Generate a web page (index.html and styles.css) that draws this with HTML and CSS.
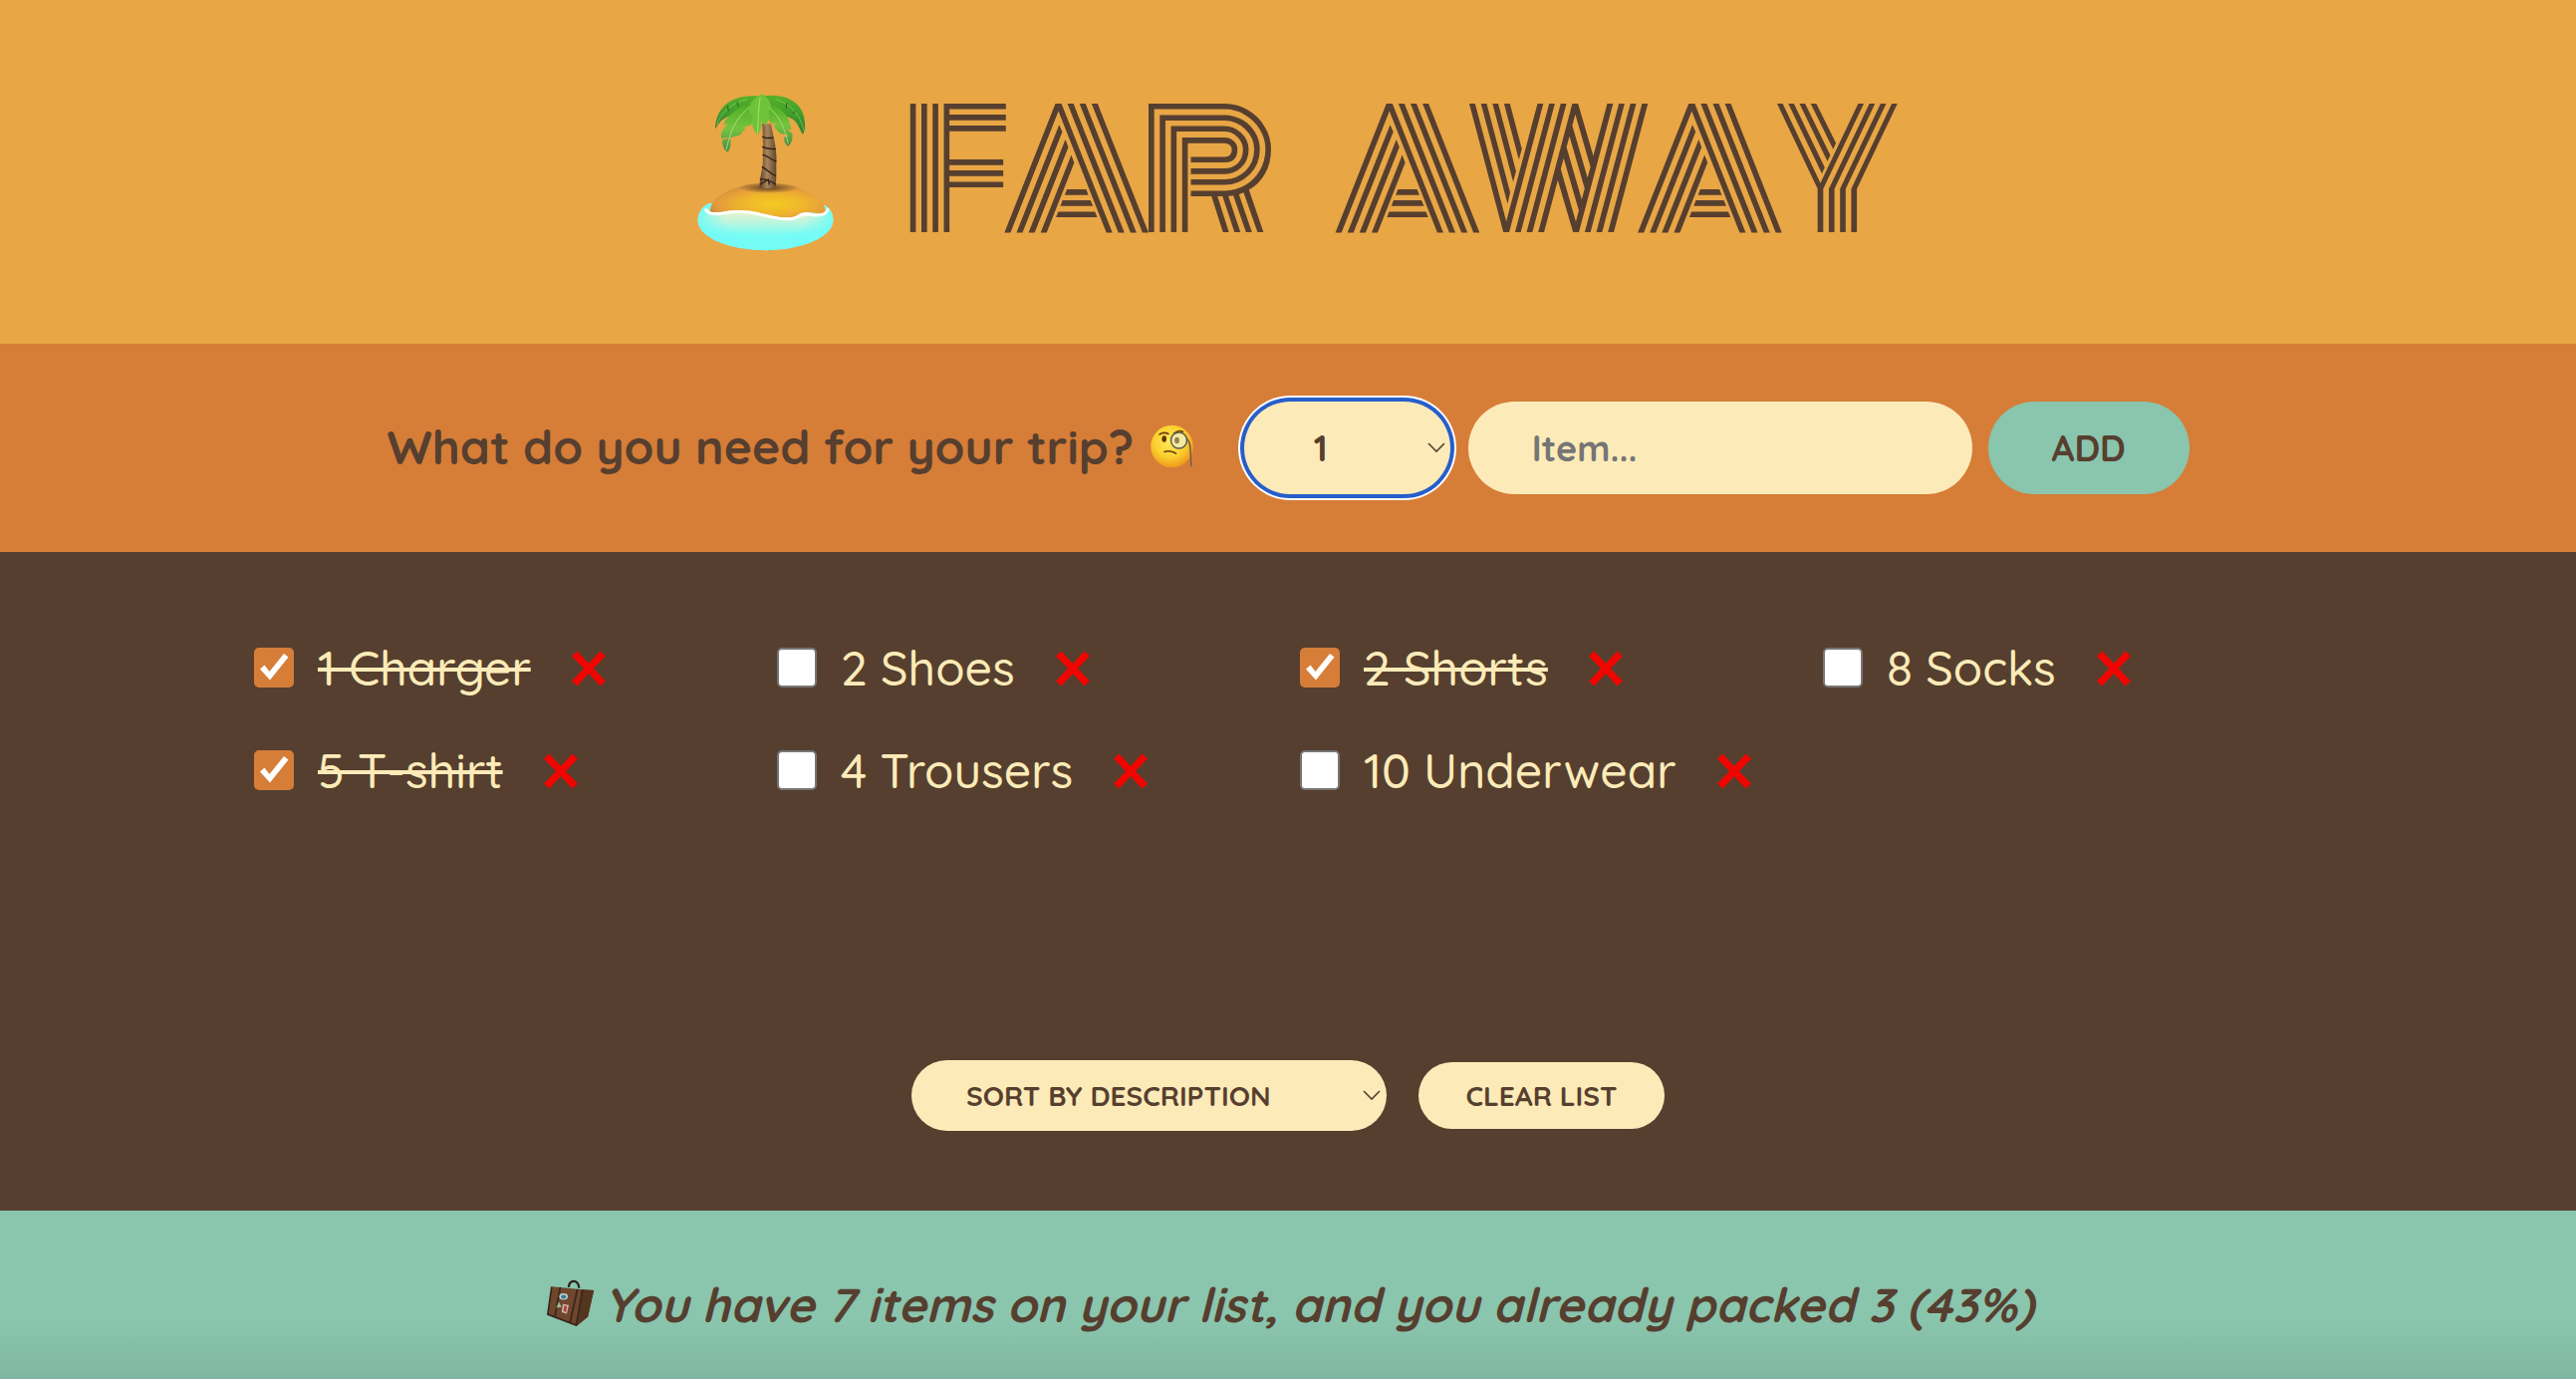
FILE: index.html
```html
<!DOCTYPE html>
<html lang="en">
<head>
<meta charset="utf-8">
<title>Far Away</title>
<link rel="stylesheet" href="styles.css">
</head>
<body>
<div class="app">
  <header class="logo">
    <svg class="island" viewBox="60 42 412 474" aria-hidden="true">
      <defs>
        <radialGradient id="sand" cx=".55" cy=".6" r=".6"><stop offset="0" stop-color="#f5ca22"/><stop offset=".45" stop-color="#efb62c"/><stop offset=".8" stop-color="#e59c3c"/><stop offset="1" stop-color="#c58a3c"/></radialGradient>
        <linearGradient id="sea" x1="0" y1="0" x2="0" y2="1"><stop offset="0" stop-color="#fff"/><stop offset=".2" stop-color="#e6f3cc"/><stop offset=".42" stop-color="#b8f6df"/><stop offset=".7" stop-color="#74fdf6"/><stop offset="1" stop-color="#8ceee6"/></linearGradient>
        <radialGradient id="shallow" cx=".5" cy=".35" r=".5"><stop offset=".6" stop-color="#74fbf6" stop-opacity="0"/><stop offset="1" stop-color="#74fbf6"/></radialGradient>
        <radialGradient id="shade"><stop offset="0" stop-color="#5e4020"/><stop offset="1" stop-color="#5e4020" stop-opacity="0"/></radialGradient>
        <linearGradient id="leaf" x1="0" y1="0" x2="0" y2="1"><stop offset="0" stop-color="#4fae22"/><stop offset=".5" stop-color="#74c43f"/><stop offset="1" stop-color="#4b8c45"/></linearGradient>
        <linearGradient id="deep" x1="0" y1="0" x2="0" y2="1"><stop offset="0" stop-color="#57b02a"/><stop offset=".5" stop-color="#3f9d2c"/><stop offset="1" stop-color="#2f7a35"/></linearGradient>
        <linearGradient id="trunk" x1="0" x2="1"><stop offset="0" stop-color="#5a3f2a"/><stop offset=".45" stop-color="#a9845a"/><stop offset="1" stop-color="#5f4630"/></linearGradient>
      </defs>
      <path fill="url(#sea)" d="M97 372C70 384 60 408 62 428c8 56 110 86 204 86s196-32 204-86c1-22-6-38-26-50z"/>
      <path fill="url(#shallow)" d="M97 372C70 384 60 408 62 428c8 56 110 86 204 86s196-32 204-86c1-22-6-38-26-50z"/>
      <path fill="url(#sand)" d="M98 402C94 352 180 312 268 312c94 0 180 40 180 88-28 8-40-4-62 0-16 2-20 18-44 16-56 0-110-22-158-19-30 1-66 14-86 5z"/>
      <ellipse cx="276" cy="326" rx="92" ry="16" fill="url(#shade)"/>
      <path fill="none" stroke="#fff" stroke-width="9" stroke-linecap="round" d="M86 392c8 14 24 13 50 10 70-12 110 4 150 12 40 9 66 6 78-2 16-12 30-6 48-4 20 2 36 0 42-16"/>
      <path fill="url(#trunk)" d="M256 132c3 46 2 80 2 112 0 26-10 50-10 80 14 5 34 5 48 1 5-32 1-60 3-90-1-38-10-66-16-102z"/>
      <path fill="none" stroke="#2e1e14" stroke-width="4" d="M256 171c10 8 18 3 34 4M256 202c10 4 24 8 42 6M257 226c16 2 26 16 42 20M255 262c16 8 26 22 42 28M249 300c18-2 32 4 48 16M250 316l24-16 4 16"/>
      <path fill="url(#deep)" d="M258 50c-64-8-140 8-144 98 12-22 24-34 46-40 40-6 70-26 98-50z"/>
      <path fill="url(#deep)" d="M258 48c66-8 130 14 127 96 0 10-4 16-7 20-10-18-16-38-34-48-40-14-60-26-86-60z"/>
      <path fill="url(#leaf)" d="M222 74c-32 4-68 26-84 62l14-4-18 24c-4 16-2 26 4 20l22-4-24 10c-2 16 6 30 15 36 10-10 10-24 10-36l-6-6 34-10 16-20-2-6 18-2c14-18 16-40 16-62z"/>
      <path fill="url(#leaf)" d="M272 74c36 4 68 34 72 76l-14-2 17 14c2 16-2 28-12 38-10-6-14-18-12-28l14-4-26-6c-10-8-16-16-20-24l8-8-16 2c-12-18-14-38-11-58z"/>
      <path fill="#6ec438" d="M256 43c-38 16-46 46-36 64l8-6c-8 24 0 50 14 64 12-14 14-30 8-40l14 12c16-12 16-36 10-46l6 2c6-20-4-40-24-50z"/>
      <path fill="none" stroke="#b4e288" stroke-width="2.500" stroke-linecap="round" d="M250 54c-6 30-6 70-8 106M216 84c-32 26-54 56-68 126M278 84c30 26 46 62 56 106"/>
      <path fill="none" stroke="#8fd060" stroke-width="2" d="M210 58c-48 12-78 40-92 78M296 58c48 14 76 50 86 96"/>
      <path fill="none" stroke="#1f5d1c" stroke-width="3" d="M152 78l2 16M180 66l4 14M330 70l-2 16M356 94l-8 8"/>
    </svg>
    <h1>Far Away</h1>
  </header>

  <form class="add-form">
    <h3>What do you need for your trip?
      <svg class="face" viewBox="0 0 44 46" aria-hidden="true">
        <defs><radialGradient id="skin" cx=".45" cy=".38" r=".62"><stop offset="0" stop-color="#fdeb5c"/><stop offset=".6" stop-color="#fbd02f"/><stop offset="1" stop-color="#ee981c"/></radialGradient></defs>
        <circle cx="21.5" cy="22" r="21.3" fill="url(#skin)"/>
        <ellipse cx="13.700" cy="14.500" rx="2.300" ry="3.300" fill="#5f3408"/>
        <path d="M9 10q4-3 9-.5M23.500 9q5-4 9-1.500M14 27.500q5-2 11.500 1.500" fill="none" stroke="#6b3a0a" stroke-width="1.600" stroke-linecap="round"/>
        <circle cx="28.500" cy="16" r="8" fill="#f3eba0" stroke="#5a5a50" stroke-width="1.500"/>
        <ellipse cx="26.500" cy="16" rx="2.400" ry="3.300" fill="#96814a"/>
        <path d="M36.500 14.500c5 3 3 16 4.500 27.500" fill="none" stroke="#6a5a46" stroke-width="1.400"/>
      </svg>
    </h3>
    <div class="select quantity" tabindex="0"><span>1</span>
      <svg class="arrow" viewBox="0 0 18 11"><path d="M1 1l8 8 8-8"/></svg>
    </div>
    <input class="item-name" type="text" placeholder="Item...">
    <button class="add" type="button">Add</button>
  </form>

  <main class="list">
    <svg class="defs" width="0" height="0" aria-hidden="true">
      <symbol id="cross" viewBox="0 0 36 36"><path fill="#f10500" d="M1 5.500 6.500 .5 18 13 29.500 .5 35 5.500 22.800 18 35 30.500 29.500 35.500 18 23 6.500 35.500 1 30.500 13.200 18z"/></symbol>
      <symbol id="tick" viewBox="0 0 40 40"><path fill="#fff" d="M6 21.500l4.500-4 5 6.500L30 6l4.500 3.500L16 32.500z"/></symbol>
    </svg>
    <ul>
      <li><i class="box on"><svg><use href="#tick"/></svg></i><span class="packed">1 Charger</span><svg class="x"><use href="#cross"/></svg></li>
      <li><i class="box"></i><span>2 Shoes</span><svg class="x"><use href="#cross"/></svg></li>
      <li><i class="box on"><svg><use href="#tick"/></svg></i><span class="packed">2 Shorts</span><svg class="x"><use href="#cross"/></svg></li>
      <li><i class="box"></i><span>8 Socks</span><svg class="x"><use href="#cross"/></svg></li>
      <li><i class="box on"><svg><use href="#tick"/></svg></i><span class="packed">5 T-shirt</span><svg class="x"><use href="#cross"/></svg></li>
      <li><i class="box"></i><span>4 Trousers</span><svg class="x"><use href="#cross"/></svg></li>
      <li><i class="box"></i><span>10 Underwear</span><svg class="x"><use href="#cross"/></svg></li>
    </ul>
    <div class="actions">
      <div class="select sort"><span>Sort by description</span>
        <svg class="arrow" viewBox="0 0 18 11"><path d="M1 1l8 8 8-8"/></svg>
      </div>
      <button class="clear" type="button">Clear list</button>
    </div>
  </main>

  <footer class="stats">
    <svg class="bag" viewBox="30 32 144 142" aria-hidden="true">
      <path fill="none" stroke="#2b211c" stroke-width="7" d="M96 56c-2-24 30-26 31 2"/>
      <path fill="#6f462e" d="M44 54l86 8 42 3-18 80-34 28-88-35z"/>
      <path fill="#54351f" d="M134 63l38 2-18 80-34 28z"/>
      <path fill="none" stroke="#3a261a" stroke-width="5" d="M70 56L54 144M122 62l-22 100M138 64l-20 108M44 54l-12 84 88 34"/>
      <ellipse cx="80" cy="84" rx="13" ry="10" fill="#c3d0c8"/>
      <ellipse cx="80" cy="85" rx="8" ry="6" fill="#3a7898"/>
      <path fill="#9fbf94" d="M66 100l8 16-16 2z"/>
      <path fill="#cbb5ac" d="M78 107l18 3-6 26-16-4z"/>
      <path fill="#b8382f" d="M82 112l8 1-2 18-8-2z"/>
    </svg>
    <em>You have 7 items on your list, and you already packed 3 (43%)</em>
  </footer>
</div>
</body>
</html>
```
FILE: styles.css
```css
* { box-sizing: border-box; margin: 0; padding: 0; }

:root {
  --sun: #e8a645;
  --clay: #d67d38;
  --bark: #563f2f;
  --cream: #fcebb8;
  --mint: #8ac5ae;
}

body {
  font-family: Quicksand, Nunito, "Open Sans", sans-serif;
  color: var(--bark);
}

.app {
  display: grid;
  grid-template-rows: 345px 209px 661px 169px;
  height: 1384px;
  overflow: hidden;
}

.logo {
  display: flex;
  align-items: center;
  justify-content: center;
  padding-left: 11px;
  background: var(--sun);
}
.island { width: 137px; height: 158px; margin-right: 70px; }
h1 {
  font-family: Monoton, sans-serif;
  font-size: 160px;
  font-weight: 400;
  letter-spacing: -10px;
  word-spacing: 60px;
  text-transform: uppercase;
}

.add-form {
  display: flex;
  align-items: center;
  justify-content: center;
  gap: 16px;
  padding-bottom: 1px;
  background: var(--clay);
}
h3 { font-size: 48px; font-weight: 700; margin-right: 34px; padding-bottom: 2px; white-space: nowrap; }
.face { width: 44px; height: 46px; vertical-align: -6px; margin-left: 3px; }

.select, .item-name, .add, .clear {
  border: 0;
  border-radius: 200px;
  background: var(--cream);
  color: inherit;
  font-family: inherit;
  font-weight: 700;
}
.select { display: flex; align-items: center; justify-content: space-between; }
.arrow { width: 18px; height: 11px; fill: none; stroke: var(--bark); stroke-width: 1.6; }

.quantity {
  width: 207px;
  height: 93px;
  padding: 0 5px 0 70px;
  font-size: 36px;
  box-shadow: 0 0 0 4px #265ecb, 0 0 0 6px #fff;
  outline: 0;
  margin-right: 2px;
}
.item-name { width: 506px; height: 93px; padding: 0 64px; font-size: 36px; }
.item-name::placeholder { color: #757575; }
.add { width: 202px; height: 93px; background: var(--mint); font-size: 36px; text-transform: uppercase; }

.list {
  display: flex;
  flex-direction: column;
  align-items: center;
  justify-content: space-between;
  padding: 64px 0 80px;
  background: var(--bark);
  color: var(--cream);
}
.defs { position: absolute; }
ul {
  display: grid;
  grid-template-columns: repeat(4, 525px);
  width: 2102px;
  padding-left: 13px;
  list-style: none;
}
li { display: flex; align-items: center; height: 103px; font-size: 48px; font-weight: 500; }
.box { width: 40px; height: 40px; margin-right: 24px; border: 2px solid #767676; border-radius: 5px; background: #fff; }
.box.on { border: 0; background: var(--clay); }
.box svg { display: block; width: 40px; height: 40px; }
.packed { text-decoration: line-through; }
.x { width: 36px; height: 36px; margin: 3px 0 0 40px; }

.actions { display: flex; align-items: center; gap: 32px; color: var(--bark); }
.sort { width: 477px; height: 71px; padding: 0 6px 0 55px; font-size: 28px; text-transform: uppercase; }
.clear { width: 247px; height: 67px; font-size: 28px; text-transform: uppercase; }

.stats {
  display: flex;
  align-items: center;
  justify-content: center;
  gap: 9px;
  padding: 18px 0 0 5px;
  background: linear-gradient(var(--mint) 65%, #80b7a1);
  font-size: 48px;
  font-weight: 700;
}
.bag { width: 48px; height: 47px; margin-top: -2px; }
```
